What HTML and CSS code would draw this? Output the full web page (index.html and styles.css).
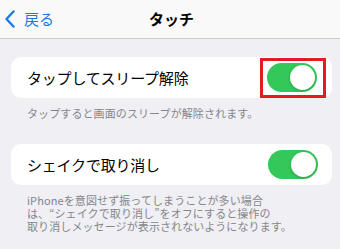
FILE: index.html
```html
<!DOCTYPE html>
<html lang="ja">
<head>
<meta charset="utf-8">
<link rel="stylesheet" href="styles.css">
</head>
<body>
<header class="nav">
  <div class="back">
    <svg class="chev" width="12" height="18" viewBox="0 0 12 18"><path d="M9.5 1.5 L2.5 9 L9.5 16.5" fill="none" stroke="#1a7ae6" stroke-width="2.4" stroke-linecap="round" stroke-linejoin="round"/></svg>
    <span class="back-text">戻る</span>
  </div>
  <div class="title">タッチ</div>
</header>
<main class="content">
  <section class="group first">
    <div class="cell">
      <span class="label">タップしてスリープ解除</span>
      <span class="hl"><span class="toggle"><span class="knob"></span></span></span>
    </div>
    <p class="footer">タップすると画面のスリープが解除されます。</p>
  </section>
  <section class="group">
    <div class="cell">
      <span class="label">シェイクで取り消し</span>
      <span class="plain"><span class="toggle"><span class="knob"></span></span></span>
    </div>
    <p class="footer">iPhoneを意図せず振ってしまうことが多い場合<br>は、“シェイクで取り消し”をオフにすると操作の<br>取り消しメッセージが表示されないようになります。</p>
  </section>
</main>
</body>
</html>
```
FILE: styles.css
```css
* { box-sizing: border-box; }
html, body { margin: 0; padding: 0; }
body {
  width: 340px;
  height: 249px;
  overflow: hidden;
  background: #efeff4;
  font-family: "Noto Sans CJK JP", "Noto Sans", sans-serif;
  color: #000;
}
.nav {
  height: 39px;
  background: #f9f9f9;
  border-bottom: 1px solid #c9c9cd;
  display: flex;
  align-items: center;
  justify-content: center;
  position: relative;
}
.back {
  position: absolute;
  left: 4px;
  top: 0;
  height: 38px;
  display: flex;
  align-items: center;
  gap: 8px;
  color: #1a7ae6;
}
.chev { display: block; }
.back-text { font-size: 15px; line-height: 20px; }
.title {
  font-size: 15px;
  font-weight: 700;
  line-height: 20px;
  margin-left: 3px;
  margin-top: -1px;
}
.content { padding: 18px 8px 0 11px; }
.group.first { margin-bottom: 24px; }
.cell {
  background: #fff;
  border-radius: 10px;
  height: 41px;
  display: flex;
  align-items: center;
  justify-content: space-between;
  padding: 0 14px 0 16px;
}
.label { font-size: 15px; line-height: 20px; letter-spacing: -0.2px; }
.hl {
  display: flex;
  border: 3px solid #e21c24;
  padding: 2px 6px 3px 4px;
  margin-right: -8px;
}
.plain { display: flex; }
.toggle {
  width: 50px;
  height: 29px;
  border-radius: 15px;
  background: #34c759;
  position: relative;
  display: block;
}
.knob {
  position: absolute;
  right: 2px;
  top: 2px;
  width: 25px;
  height: 25px;
  border-radius: 50%;
  background: #fff;
  box-shadow: 0 1px 3px rgba(0,0,0,0.2);
}
.footer {
  margin: 9px 0 0 16px;
  font-size: 11px;
  line-height: 13px;
  color: #86868b;
  letter-spacing: 0.1px;
}
```
